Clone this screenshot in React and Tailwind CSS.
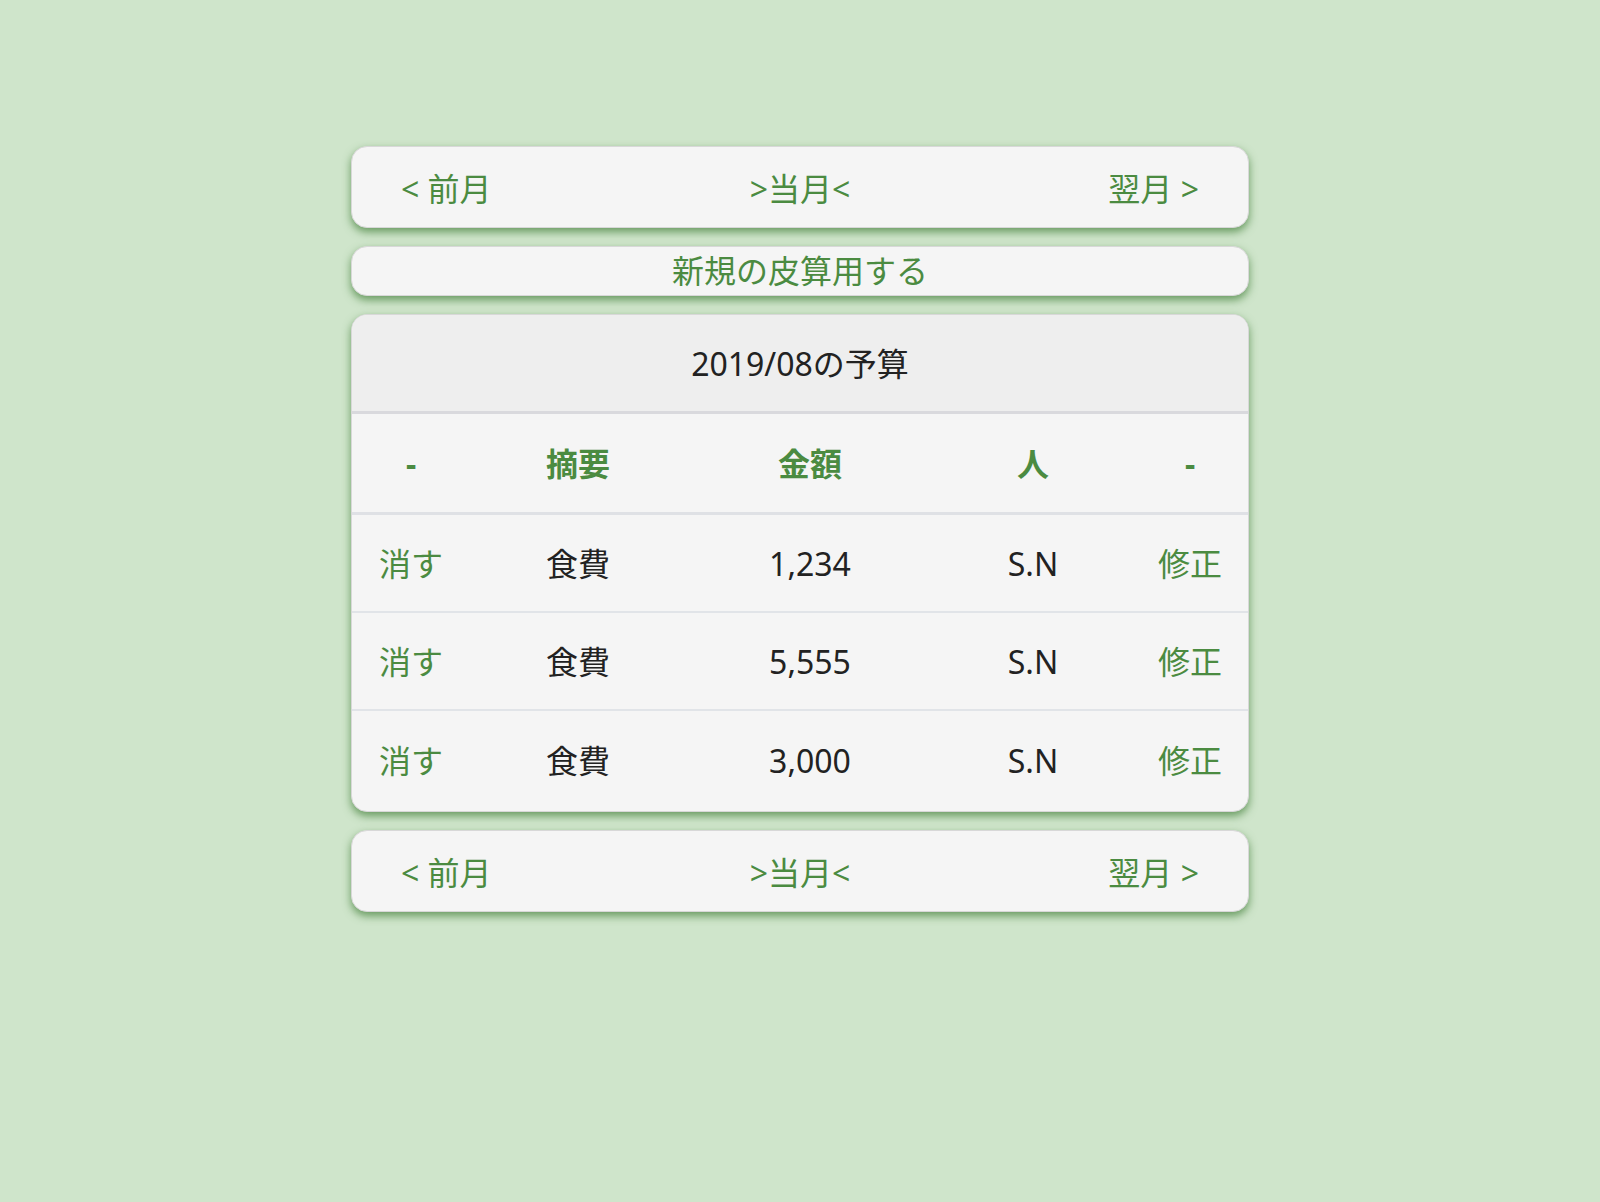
const rows = [
  { name: "食費", amount: "1,234", who: "S.N" },
  { name: "食費", amount: "5,555", who: "S.N" },
  { name: "食費", amount: "3,000", who: "S.N" },
];

const card =
  "bg-[#f5f5f5] border border-[#d8d8d8] rounded-[16px] shadow-[0_4px_8px_rgba(70,130,60,0.75)]";

const cols = "grid grid-cols-[118px_216px_248px_198px_116px]";

function MonthNav() {
  return (
    <div className={`${card} h-[82px] pt-[4px] flex items-center justify-between px-[49px] text-[#4b8b41]`}>
      <span>&lt; 前月</span>
      <span>&gt;当月&lt;</span>
      <span>翌月 &gt;</span>
    </div>
  );
}

export default function App() {
  return (
    <div
      className="min-h-screen bg-[#cfe5cb] pt-[146px] text-[32px] leading-[1.3]"
      style={{ fontFamily: '"Noto Sans", "Noto Sans CJK JP", sans-serif' }}
    >
      <div className="w-[898px] mx-auto flex flex-col gap-[18px]">
        <MonthNav />

        <div className={`${card} h-[50px] flex items-center justify-center text-[#4b8b41]`}>
          新規の皮算用する
        </div>

        <div className={`${card} overflow-hidden`}>
          <div className="h-[99px] pt-[2px] flex items-center justify-center bg-[#eeeeee] border-b-[3px] border-[#d9d9dd] text-[#222]">
            2019/08の予算
          </div>
          <div className={`${cols} h-[101px] pt-[2px] items-center text-center font-bold text-[#4b8b41] border-b-[3px] border-[#dfe1e5]`}>
            <span>-</span>
            <span>摘要</span>
            <span>金額</span>
            <span>人</span>
            <span>-</span>
          </div>
          {rows.map((r, i) => (
            <div
              key={i}
              className={`${cols} ${i < rows.length - 1 ? "h-[98px] border-b-2 border-[#e1e4e8]" : "h-[100px] pb-[2px]"} pt-[2px] items-center text-center`}
            >
              <span className="text-[#4b8b41]">消す</span>
              <span className="text-[#222]">{r.name}</span>
              <span className="text-[#222]">{r.amount}</span>
              <span className="text-[#222]">{r.who}</span>
              <span className="text-[#4b8b41]">修正</span>
            </div>
          ))}
        </div>

        <MonthNav />
      </div>
    </div>
  );
}
